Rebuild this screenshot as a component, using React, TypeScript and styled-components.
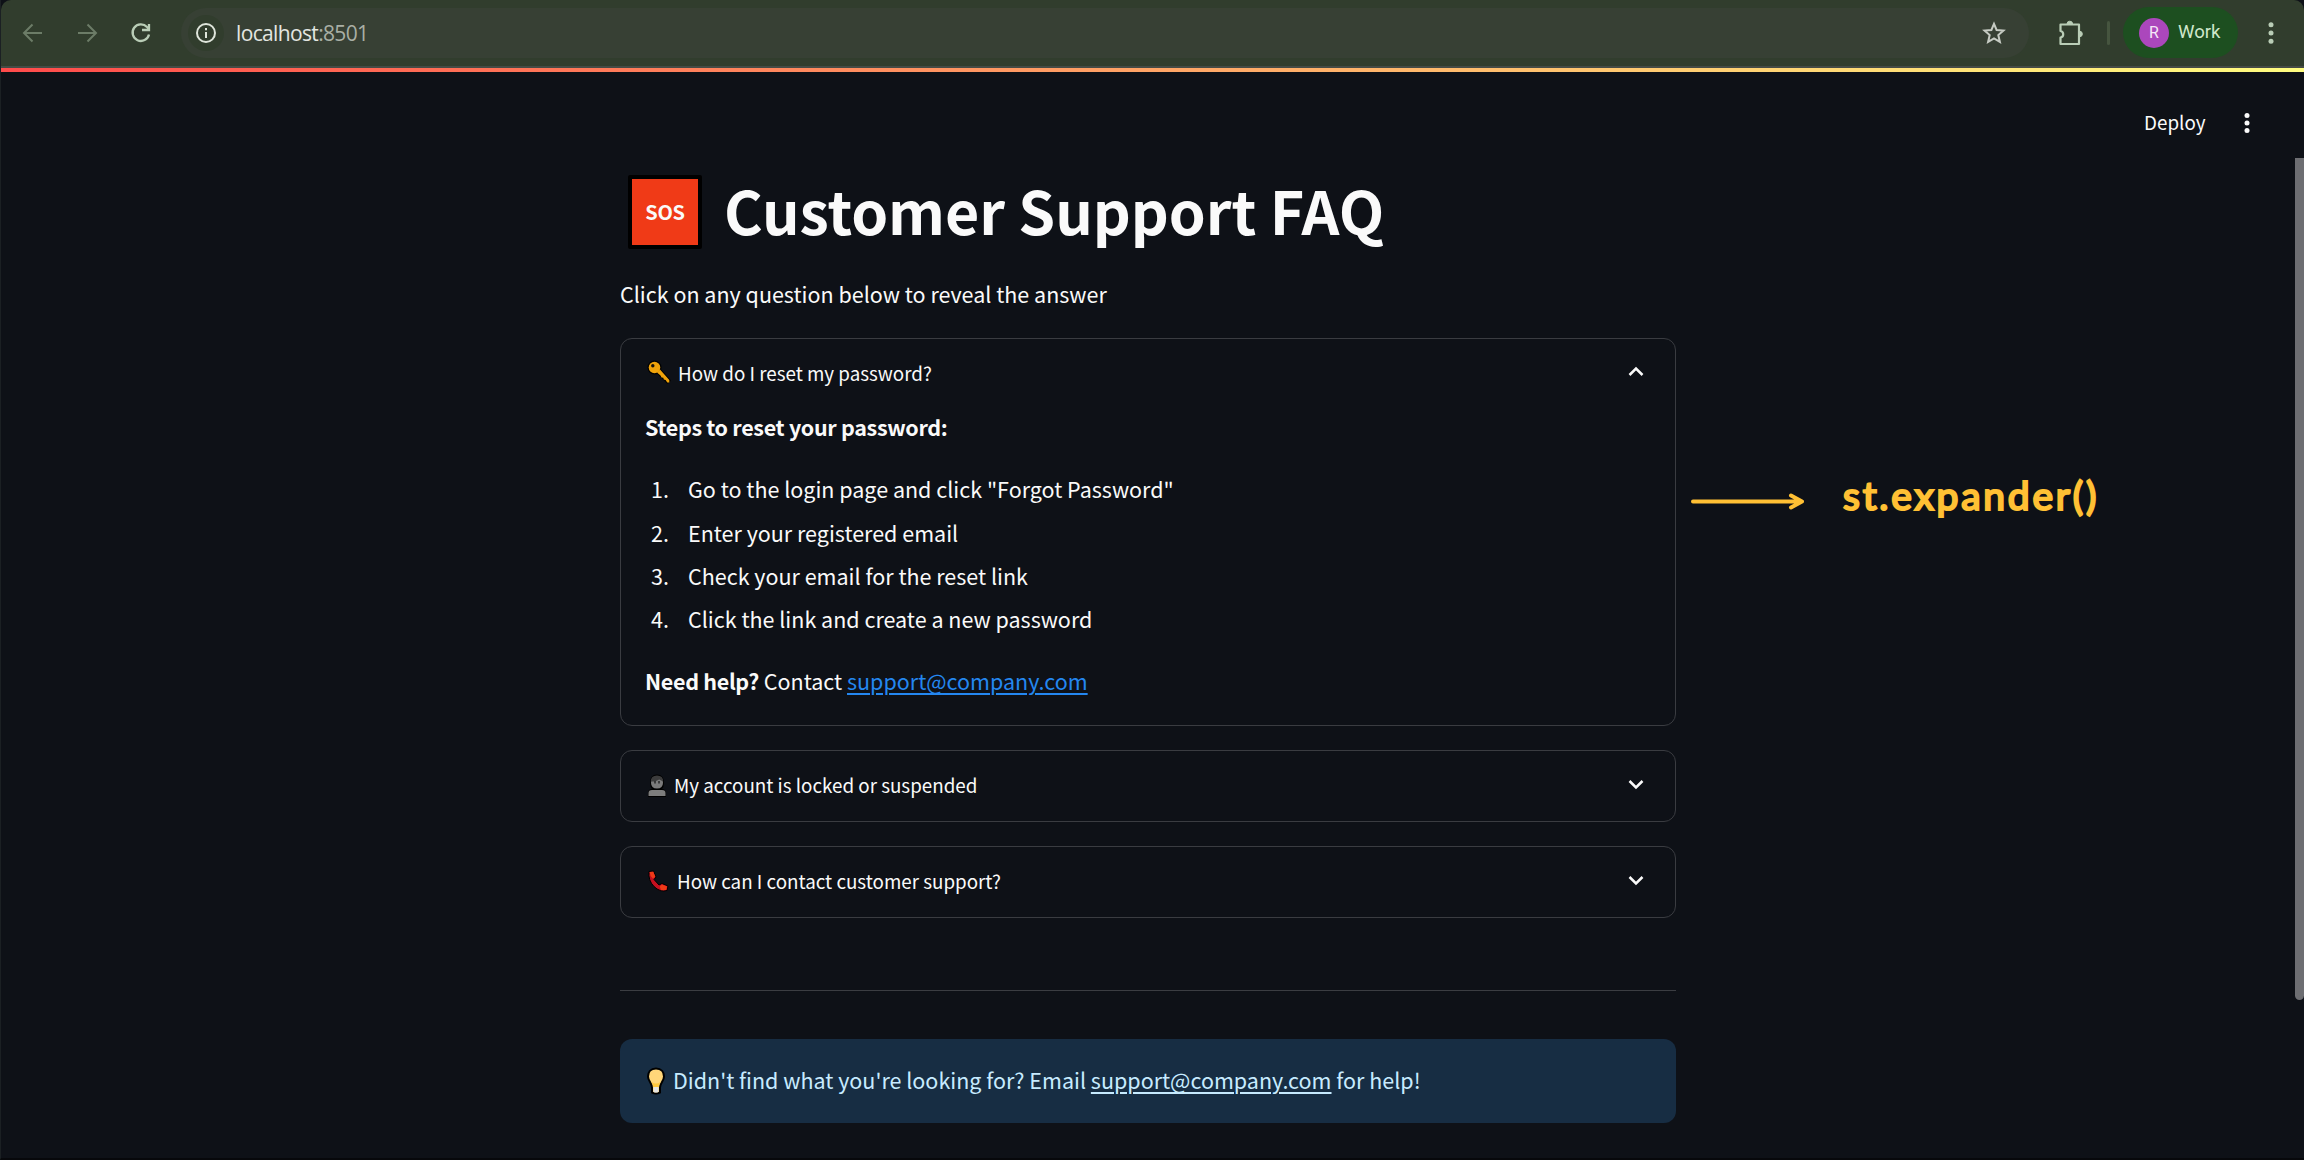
import React from "react";
import styled, { createGlobalStyle } from "styled-components";

const sans = `"Noto Sans CJK SC", "Noto Sans", sans-serif`;

const GlobalStyle = createGlobalStyle`
  * { box-sizing: border-box; }
  html, body { margin: 0; background: #0e1117; }
  body { font-family: ${sans}; color: #fafafa; overflow: hidden; }
  p, h1, ol { margin: 0; padding: 0; }
`;

const Window = styled.div`
  display: flex;
  flex-direction: column;
  width: 2304px;
  height: 1160px;
  background: #0e1117;
  border-left: 1px solid #1b2023;
  border-bottom: 2px solid #07080b;
`;

const Toolbar = styled.header`
  display: flex;
  align-items: center;
  height: 66px;
  padding: 0 30px 1px 20px;
  background: #313d2d;
  border-radius: 10px 10px 0 0;
  color: #b9cdb6;
`;

const NavButtons = styled.div`
  display: flex;
  align-items: center;
  gap: 30px;
  width: 160px;
`;

const AddressBar = styled.div`
  display: flex;
  align-items: center;
  width: 1848px;
  height: 50px;
  padding: 0 23px 0 7px;
  background: #374034;
  border-radius: 25px;
`;

const SiteInfo = styled.div`
  display: grid;
  place-items: center;
  width: 36px;
  height: 36px;
  border-radius: 50%;
  background: #313d2d;
  color: #dfe5db;
`;

const Url = styled.div`
  flex: 1;
  margin-left: 12px;
  font: 400 21px/30px "Open Sans", sans-serif;
  letter-spacing: -0.65px;
  color: #e3e6e1;
`;

const Port = styled.span`
  color: #a9afa5;
`;

const ToolbarRight = styled.div`
  display: flex;
  align-items: center;
  flex: 1;
  padding-left: 29px;
`;

const Separator = styled.div`
  width: 3px;
  height: 24px;
  margin: 0 13px 0 23px;
  border-radius: 2px;
  background: #46553f;
`;

const Profile = styled.div`
  display: flex;
  align-items: center;
  gap: 9px;
  width: 115px;
  height: 51px;
  padding-left: 16px;
  border-radius: 26px;
  background: #1d4f20;
  color: #cfe8cb;
  font: 400 18.6px/24px Roboto, sans-serif;
`;

const ProfileName = styled.span`
  padding-bottom: 1px;
`;

const Avatar = styled.div`
  display: grid;
  place-items: center;
  width: 30px;
  height: 30px;
  border-radius: 50%;
  background: #ab47bc;
  color: #f6e6f8;
  font: 400 16px/30px Roboto, sans-serif;
`;

const Decoration = styled.div`
  height: 6px;
  border-top: 2px solid #454b45;
  background: linear-gradient(90deg, #ff4b4b, #fffd80);
  background-clip: padding-box;
`;

const Page = styled.main`
  display: grid;
  grid-template-columns: 619px 1056px 1fr 9px;
  flex: 1;
  min-height: 0;
`;

const Content = styled.section`
  grid-column: 2;
  display: flex;
  flex-direction: column;
  padding-top: 89px;
`;

const Title = styled.h1`
  display: flex;
  align-items: center;
  height: 100px;
  padding-left: 8px;
  font-size: 59.1px;
  font-weight: 700;
  line-height: 96px;
  white-space: nowrap;
`;

const TitleText = styled.span`
  padding-bottom: 4px;
  letter-spacing: -0.05px;
`;

const SosBadge = styled.span`
  display: grid;
  place-items: center;
  width: 74px;
  height: 74px;
  margin: 1px 22px 0 0;
  border: 4px solid #000;
  border-radius: 2px;
  background: #f03a17;
  font: 700 20px/66px ${sans};
  letter-spacing: -0.3px;
`;

const Text = styled.p`
  font-size: 21.5px;
  line-height: 38.4px;
  white-space: nowrap;
`;

const Strong = styled.b`
  font-weight: 700;
  letter-spacing: -0.31px;
`;

const Intro = styled(Text)`
  margin-top: 14px;
`;

const Expander = styled.article<{ $height: number; $top: number }>`
  height: ${(p) => p.$height}px;
  margin-top: ${(p) => p.$top}px;
  border: 1px solid #3a3c41;
  border-radius: 12px;
`;

const Summary = styled.div`
  display: flex;
  align-items: center;
  height: 68px;
  padding: 0 27px 0 26px;
  font-size: 18.8px;
  line-height: 32px;
  white-space: nowrap;
`;

const Label = styled.span<{ $gap: number }>`
  flex: 1;
  margin-left: ${(p) => p.$gap}px;
  padding-bottom: 1px;
`;

const Details = styled.div`
  padding: 1px 24px 0;
`;

const Steps = styled.ol`
  display: flex;
  flex-direction: column;
  gap: 4.8px;
  margin: 24px 0;
  list-style: none;
`;

const Step = styled.li`
  display: grid;
  grid-template-columns: 37px 1fr;
  padding-left: 6px;
  font-size: 21.5px;
  line-height: 38.4px;
  white-space: nowrap;
`;

const Link = styled.a<{ $color: string }>`
  color: ${(p) => p.$color};
  text-decoration: underline;
  text-decoration-thickness: 2px;
  text-underline-offset: 2.5px;
`;

const Divider = styled.hr`
  width: 100%;
  height: 1px;
  margin: 72px 0 48px;
  border: 0;
  background: #3b3d42;
`;

const Alert = styled.aside`
  display: flex;
  align-items: center;
  height: 84px;
  padding: 0 26px 1px;
  border-radius: 12px;
  background: #172d43;
  color: #c7ebff;
`;

const AlertText = styled(Text)`
  margin-left: 7px;
`;

const SidePane = styled.section`
  display: flex;
  flex-direction: column;
`;

const AppMenu = styled.div`
  display: flex;
  justify-content: flex-end;
  align-items: center;
  gap: 38px;
  height: 102px;
  padding-right: 45.5px;
  font-size: 18.8px;
  line-height: 28px;
`;

const DeployLabel = styled.span`
  padding-bottom: 3px;
`;

const Annotation = styled.div`
  display: flex;
  align-items: center;
  gap: 38px;
  height: 60px;
  margin-top: 297px;
  padding-left: 13px;
  color: #ffc034;
`;

const Code = styled.span`
  padding-bottom: 12px;
  font: 400 39px/48px Lato, sans-serif;
  letter-spacing: 2.75px;
  -webkit-text-stroke: 2.2px #ffc034;
  stroke-linejoin: round;
  white-space: nowrap;
`;

const Thumb = styled.div`
  width: 9px;
  height: 842px;
  margin-top: 86px;
  border-radius: 0 0 5px 5px;
  background: #6d6e72;
`;

const Svg = styled.svg`
  display: block;
  flex: none;
`;

const Arrow = ({ forward }: { forward?: boolean }) => (
  <Svg width="24" height="24" viewBox="0 0 24 24" fill="none" stroke="#6c7c67" strokeWidth="2">
    {forward ? <path d="M3 12h17M12.500 3.500 21 12l-8.500 8.500" /> : <path d="M21 12H4M11.500 3.500 3 12l8.500 8.500" />}
  </Svg>
);

const Reload = () => (
  <Svg width="24" height="24" viewBox="0 0 24 24" fill="none" stroke="currentColor" strokeWidth="2.300">
    <path d="M20 13.500a8.300 8.300 0 1 1-2-7.500l2 2M20 3v6h-7" />
  </Svg>
);

const Info = () => (
  <Svg width="22" height="22" viewBox="0 0 22 22" fill="none" stroke="currentColor" strokeWidth="2">
    <circle cx="11" cy="11" r="9" />
    <path d="M11 10v6M11 6v2.200" />
  </Svg>
);

const Star = () => (
  <Svg width="24" height="24" viewBox="0 0 24 24" fill="none" stroke="#c6cbc3" strokeWidth="2">
    <path d="m12 2.800 2.600 6.200 6.900.6-5.200 4.500 1.600 6.800L12 17.300l-5.900 3.600 1.600-6.800L2.500 9.600 9.400 9z" />
  </Svg>
);

const Puzzle = () => (
  <Svg width="26" height="26" viewBox="0 0 26 26" fill="none" stroke="currentColor" strokeWidth="2.200" strokeLinejoin="round">
    <path d="M2.500 4.500H21V24H2.500v-6.500a3.300 3.300 0 0 0 0-6.500z" />
    <path d="M9 4a2.800 2.800 0 0 1 5.600 0zM21.500 11.200a2.800 2.800 0 0 1 0 5.600z" fill="currentColor" strokeWidth="1" />
  </Svg>
);

const Dots = ({ color, step }: { color: string; step: number }) => (
  <Svg width="6" height="24" viewBox="0 0 6 24" fill={color}>
    <circle cx="3" cy={12 - step} r="2.500" />
    <circle cx="3" cy="12" r="2.500" />
    <circle cx="3" cy={12 + step} r="2.500" />
  </Svg>
);

const Chevron = ({ up }: { up?: boolean }) => (
  <Svg width="24" height="24" viewBox="0 0 24 24" fill="none" stroke="#fafafa" strokeWidth="2.500">
    <path d={up ? "m5.500 14 6.500-6.500 6.500 6.500" : "m5.500 8 6.500 6.500L18.500 8"} />
  </Svg>
);

const Key = () => (
  <Svg width="24" height="26" viewBox="0 0 24 26">
    <g stroke="#000" strokeWidth="2.400" strokeLinejoin="round" fill="#000">
      <circle cx="7.500" cy="7.500" r="5.800" />
      <path d="m10 12 10.500 10.500 2-2L13 10z" />
    </g>
    <g fill="#f0a30a">
      <circle cx="7.500" cy="7.500" r="5.800" />
      <path d="m10 12.500 3.500 3 1 2 1.800.3.500 1.800 1.800.5 1.700 2.300 2 .2v-2.500L13 9.500z" />
    </g>
    <circle cx="5.800" cy="5.800" r="1.700" fill="#17120a" />
  </Svg>
);

const Person = () => (
  <Svg width="20" height="24" viewBox="0 0 20 24">
    <path d="M1 24v-5q1-3 4-3-2-2-2-6 0-8.500 7-8.500t7 8.500q0 4-2 6 3 0 4 3v5z" fill="#000" />
    <path d="M1.500 23v-3q0-3 3.500-3h10q3.500 0 3.500 3v3z" fill="#7d7d7d" />
    <path d="M4 9.500q0-6 6-6t6 6q0 6-6 6t-6-6" fill="#7b7b7b" />
    <path d="M3.800 8.500Q3.800 2.500 10 2.500t6.200 6l-4-2-4.200 2z" fill="#3c3c3c" />
    <path d="M8 8v2.500M12 8v2.500" stroke="#292929" strokeWidth="1.500" />
  </Svg>
);

const Phone = () => (
  <Svg width="22" height="24" viewBox="0 0 22 24">
    <path d="M2 2.500 6.500 2 9 8 7 10.500l5 5.500 3-1.500 6 2.500-1 4.500q-7 2-13-4T2 2.500" fill="#c50f1f" stroke="#000" strokeWidth="1" />
    <path d="M2.600 3 6.300 2.700l2 5-2.500 1.800Q3 7 2.600 3M14.800 15.500l5.200 2-.8 3.500-5 .2-1.500-3.500z" fill="#f03a17" />
  </Svg>
);

const Bulb = () => (
  <Svg width="20" height="28" viewBox="0 0 20 28">
    <path d="M10 1.500c5.500 0 8 3.800 8 8 0 4.500-4 6.500-4 11v5q-4 2-8 0v-5c0-4.500-4-6.500-4-11 0-4.200 2.500-8 8-8" fill="#ffd679" stroke="#000" strokeWidth="2" />
    <path d="M5.500 15q4.500 3 9 0-1.500 2.500-1.500 5H7q0-2.500-1.500-5" fill="#ffc83d" />
    <path d="M7.500 20h5v5q-2.500 1-5 0z" fill="#e5e5e5" />
  </Svg>
);

const LongArrow = () => (
  <Svg width="116" height="20" viewBox="0 0 116 20" fill="none" stroke="currentColor" strokeWidth="4" strokeLinecap="round" strokeLinejoin="round">
    <path d="M4 10.500h109M102 4.500l11 6-11 6" />
  </Svg>
);

const steps = [
  'Go to the login page and click "Forgot Password"',
  "Enter your registered email",
  "Check your email for the reset link",
  "Click the link and create a new password",
];

export default function App() {
  return (
    <>
      <GlobalStyle />
      <Window>
        <Toolbar>
          <NavButtons>
            <Arrow />
            <Arrow forward />
            <Reload />
          </NavButtons>
          <AddressBar>
            <SiteInfo><Info /></SiteInfo>
            <Url>localhost<Port>:8501</Port></Url>
            <Star />
          </AddressBar>
          <ToolbarRight>
            <Puzzle />
            <Separator />
            <Profile><Avatar>R</Avatar><ProfileName>Work</ProfileName></Profile>
          </ToolbarRight>
          <Dots color="#b9cdb6" step={8.3} />
        </Toolbar>
        <Decoration />
        <Page>
          <Content>
            <Title><SosBadge>SOS</SosBadge><TitleText>Customer Support FAQ</TitleText></Title>
            <Intro>Click on any question below to reveal the answer</Intro>
            <Expander $height={388} $top={24.6}>
              <Summary><Key /><Label $gap={7}>How do I reset my password?</Label><Chevron up /></Summary>
              <Details>
                <Text><Strong>Steps to reset your password:</Strong></Text>
                <Steps>
                  {steps.map((step, i) => (
                    <Step key={step}><span>{i + 1}.</span><span>{step}</span></Step>
                  ))}
                </Steps>
                <Text><Strong>Need help?</Strong> Contact <Link $color="#2487f0">support@company.com</Link></Text>
              </Details>
            </Expander>
            <Expander $height={72} $top={24}>
              <Summary><Person /><Label $gap={7}>My account is locked or suspended</Label><Chevron /></Summary>
            </Expander>
            <Expander $height={72} $top={24}>
              <Summary><Phone /><Label $gap={8}>How can I contact customer support?</Label><Chevron /></Summary>
            </Expander>
            <Divider />
            <Alert>
              <Bulb />
              <AlertText>Didn't find what you're looking for? Email <Link $color="#c7ebff">support@company.com</Link> for help!</AlertText>
            </Alert>
          </Content>
          <SidePane>
            <AppMenu><DeployLabel>Deploy</DeployLabel><Dots color="#fafafa" step={7.6} /></AppMenu>
            <Annotation><LongArrow /><Code>st.expander()</Code></Annotation>
          </SidePane>
          <Thumb />
        </Page>
      </Window>
    </>
  );
}
